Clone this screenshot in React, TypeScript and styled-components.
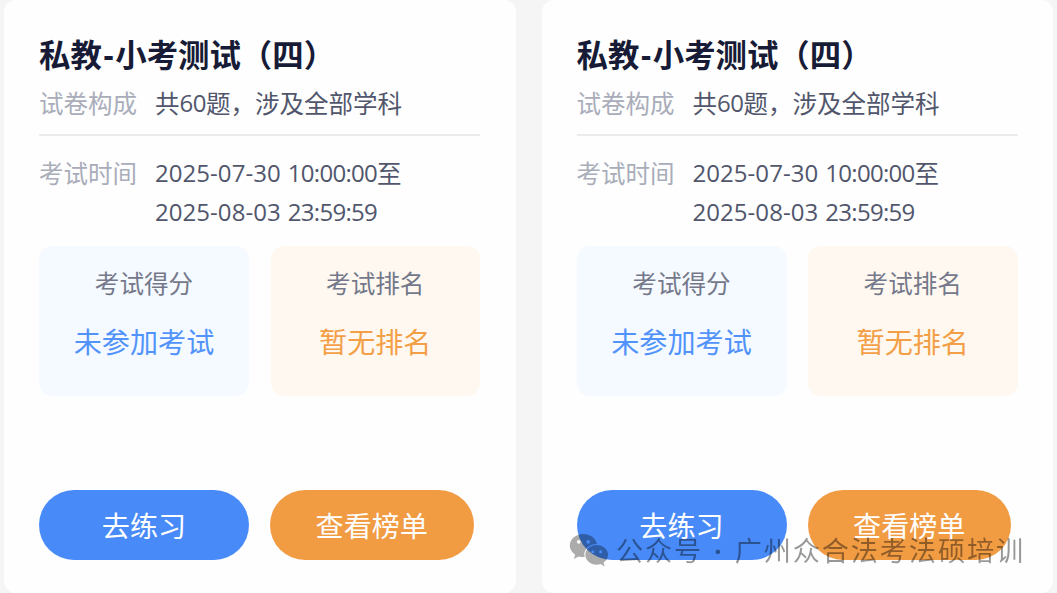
import React from "react";
import styled, { createGlobalStyle } from "styled-components";

type Tone = "blue" | "orange";

const GlobalStyle = createGlobalStyle`
  * {
    box-sizing: border-box;
  }

  body {
    margin: 0;
    background-color: #f5f5f5;
    overflow: hidden;
    font-family: "Open Sans", "Noto Sans CJK SC", sans-serif;
  }
`;

const PageWrapper = styled.div`
  position: relative;
  display: flex;
  gap: 26px;
  height: 593px;
  padding: 0 3px 0 4px;
`;

const Card = styled.div`
  display: flex;
  flex-direction: column;
  width: 511.5px;
  height: 593px;
  padding: 35px 35px 33px;
  border-radius: 12px;
  background-color: #fefefe;
`;

const Title = styled.h2`
  margin: 0;
  height: 40px;
  line-height: 40px;
  font-size: 31.4px;
  font-weight: 700;
  color: #171b36;
  white-space: nowrap;
`;

const Hyphen = styled.span`
  display: inline-block;
  width: 13.5px;
  text-align: center;
`;

const InfoRow = styled.div<{ divided?: boolean }>`
  display: flex;
  width: 441px;
  padding: ${({ divided }) => (divided ? "9px 0 10px" : "18px 0 13.5px")};
  border-bottom: ${({ divided }) => (divided ? "2px solid #ececee" : "none")};
  font-size: 24.5px;
  line-height: ${({ divided }) => (divided ? "40px" : "39px")};
  white-space: nowrap;
`;

const InfoLabel = styled.div`
  width: 116px;
  color: #a9adba;
`;

const InfoValue = styled.div`
  color: #51566c;
`;

const Digits = styled.span`
  position: relative;
  top: -1px;
  font-size: 24px;
  letter-spacing: -0.5px;
`;

const DateText = styled(Digits)`
  margin-right: 7px;
  letter-spacing: 0.05px;
`;

const TimeText = styled(Digits)`
  letter-spacing: -0.7px;
`;

const StatRow = styled.div`
  display: flex;
  gap: 21.5px;
`;

const StatBox = styled.div<{ tone: Tone }>`
  width: ${({ tone }) => (tone === "blue" ? "210px" : "209.5px")};
  height: 150px;
  padding-top: 20px;
  border-radius: 13px;
  background-color: ${({ tone }) => (tone === "blue" ? "#f4faff" : "#fef8f0")};
  text-align: center;
`;

const StatLabel = styled.div`
  line-height: 36px;
  font-size: 24.6px;
  color: #74788a;
`;

const StatValue = styled.div<{ tone: Tone }>`
  margin-top: 19px;
  line-height: 42px;
  font-size: 28.1px;
  color: ${({ tone }) => (tone === "blue" ? "#5293fb" : "#f39f47")};
`;

const ButtonRow = styled.div`
  display: flex;
  gap: 21px;
  margin-top: auto;
`;

const ActionButton = styled.button<{ tone: Tone }>`
  width: ${({ tone }) => (tone === "blue" ? "210px" : "203.5px")};
  height: 70px;
  padding: 0 0 2px;
  border: none;
  border-radius: 35px;
  background-color: ${({ tone }) => (tone === "blue" ? "#488bf8" : "#f19b43")};
  color: #fff;
  font-family: inherit;
  font-size: 28.1px;
`;

const Watermark = styled.div`
  position: absolute;
  left: 569px;
  top: 529px;
  display: flex;
  align-items: center;
  height: 40px;
  color: #000;
  font-family: "Noto Sans CJK SC", sans-serif;
  font-size: 27.2px;
  letter-spacing: 1.85px;
  white-space: nowrap;

  svg {
    width: 40px;
    height: 34px;
    margin: 3px 7px 0 0;
    opacity: 0.32;
  }
`;

const WatermarkText = styled.span`
  opacity: 0.4;
`;

const WatermarkDot = styled.span`
  display: inline-block;
  width: 31.5px;
  font-family: "Open Sans", sans-serif;
  font-weight: 700;
  text-align: center;
`;

function WechatIcon() {
  return (
    <svg viewBox="0 0 40 34" fill="currentColor">
      <mask id="bubbles">
        <rect width="40" height="34" fill="#fff" />
        <ellipse cx="27.7" cy="20.8" rx="12.4" ry="10.9" fill="#000" />
        <circle cx="9.7" cy="7.9" r="1.8" fill="#000" />
        <circle cx="19.2" cy="7.9" r="1.8" fill="#000" />
      </mask>
      <mask id="eyes">
        <rect width="40" height="34" fill="#fff" />
        <circle cx="23.8" cy="17.7" r="1.5" fill="#000" />
        <circle cx="31.6" cy="17.7" r="1.5" fill="#000" />
      </mask>
      <path
        mask="url(#bubbles)"
        d="M14.3 0C6.9 0 .8 5.1.8 11.6c0 3.7 2 6.9 5.4 9.1L4.8 25l4.9-2.5c1.5.4 3 .6 4.6.6 7.6 0 13.7-5.2 13.7-11.6S21.9 0 14.3 0z"
      />
      <path
        mask="url(#eyes)"
        d="M27.7 10.9c-6.4 0-11.4 4.4-11.4 9.9s5 9.9 11.4 9.9c1.3 0 2.6-.2 3.8-.6l4.2 2.3-1.2-3.8c2.8-1.9 4.6-4.7 4.6-7.8 0-5.5-5.1-9.9-11.4-9.9z"
      />
    </svg>
  );
}

function ExamCard() {
  return (
    <Card>
      <Title>
        私教<Hyphen>-</Hyphen>小考测试（四）
      </Title>
      <InfoRow divided>
        <InfoLabel>试卷构成</InfoLabel>
        <InfoValue>
          共<Digits>60</Digits>题，涉及全部学科
        </InfoValue>
      </InfoRow>
      <InfoRow>
        <InfoLabel>考试时间</InfoLabel>
        <InfoValue>
          <DateText>2025-07-30</DateText>
          <TimeText>10:00:00</TimeText>至
          <br />
          <DateText>2025-08-03</DateText>
          <TimeText>23:59:59</TimeText>
        </InfoValue>
      </InfoRow>
      <StatRow>
        <StatBox tone="blue">
          <StatLabel>考试得分</StatLabel>
          <StatValue tone="blue">未参加考试</StatValue>
        </StatBox>
        <StatBox tone="orange">
          <StatLabel>考试排名</StatLabel>
          <StatValue tone="orange">暂无排名</StatValue>
        </StatBox>
      </StatRow>
      <ButtonRow>
        <ActionButton tone="blue">去练习</ActionButton>
        <ActionButton tone="orange">查看榜单</ActionButton>
      </ButtonRow>
    </Card>
  );
}

function App() {
  return (
    <>
      <GlobalStyle />
      <PageWrapper>
        <ExamCard />
        <ExamCard />
        <Watermark>
          <WechatIcon />
          <WatermarkText>
            公众号<WatermarkDot>·</WatermarkDot>广州众合法考法硕培训
          </WatermarkText>
        </Watermark>
      </PageWrapper>
    </>
  );
}

export default App;
